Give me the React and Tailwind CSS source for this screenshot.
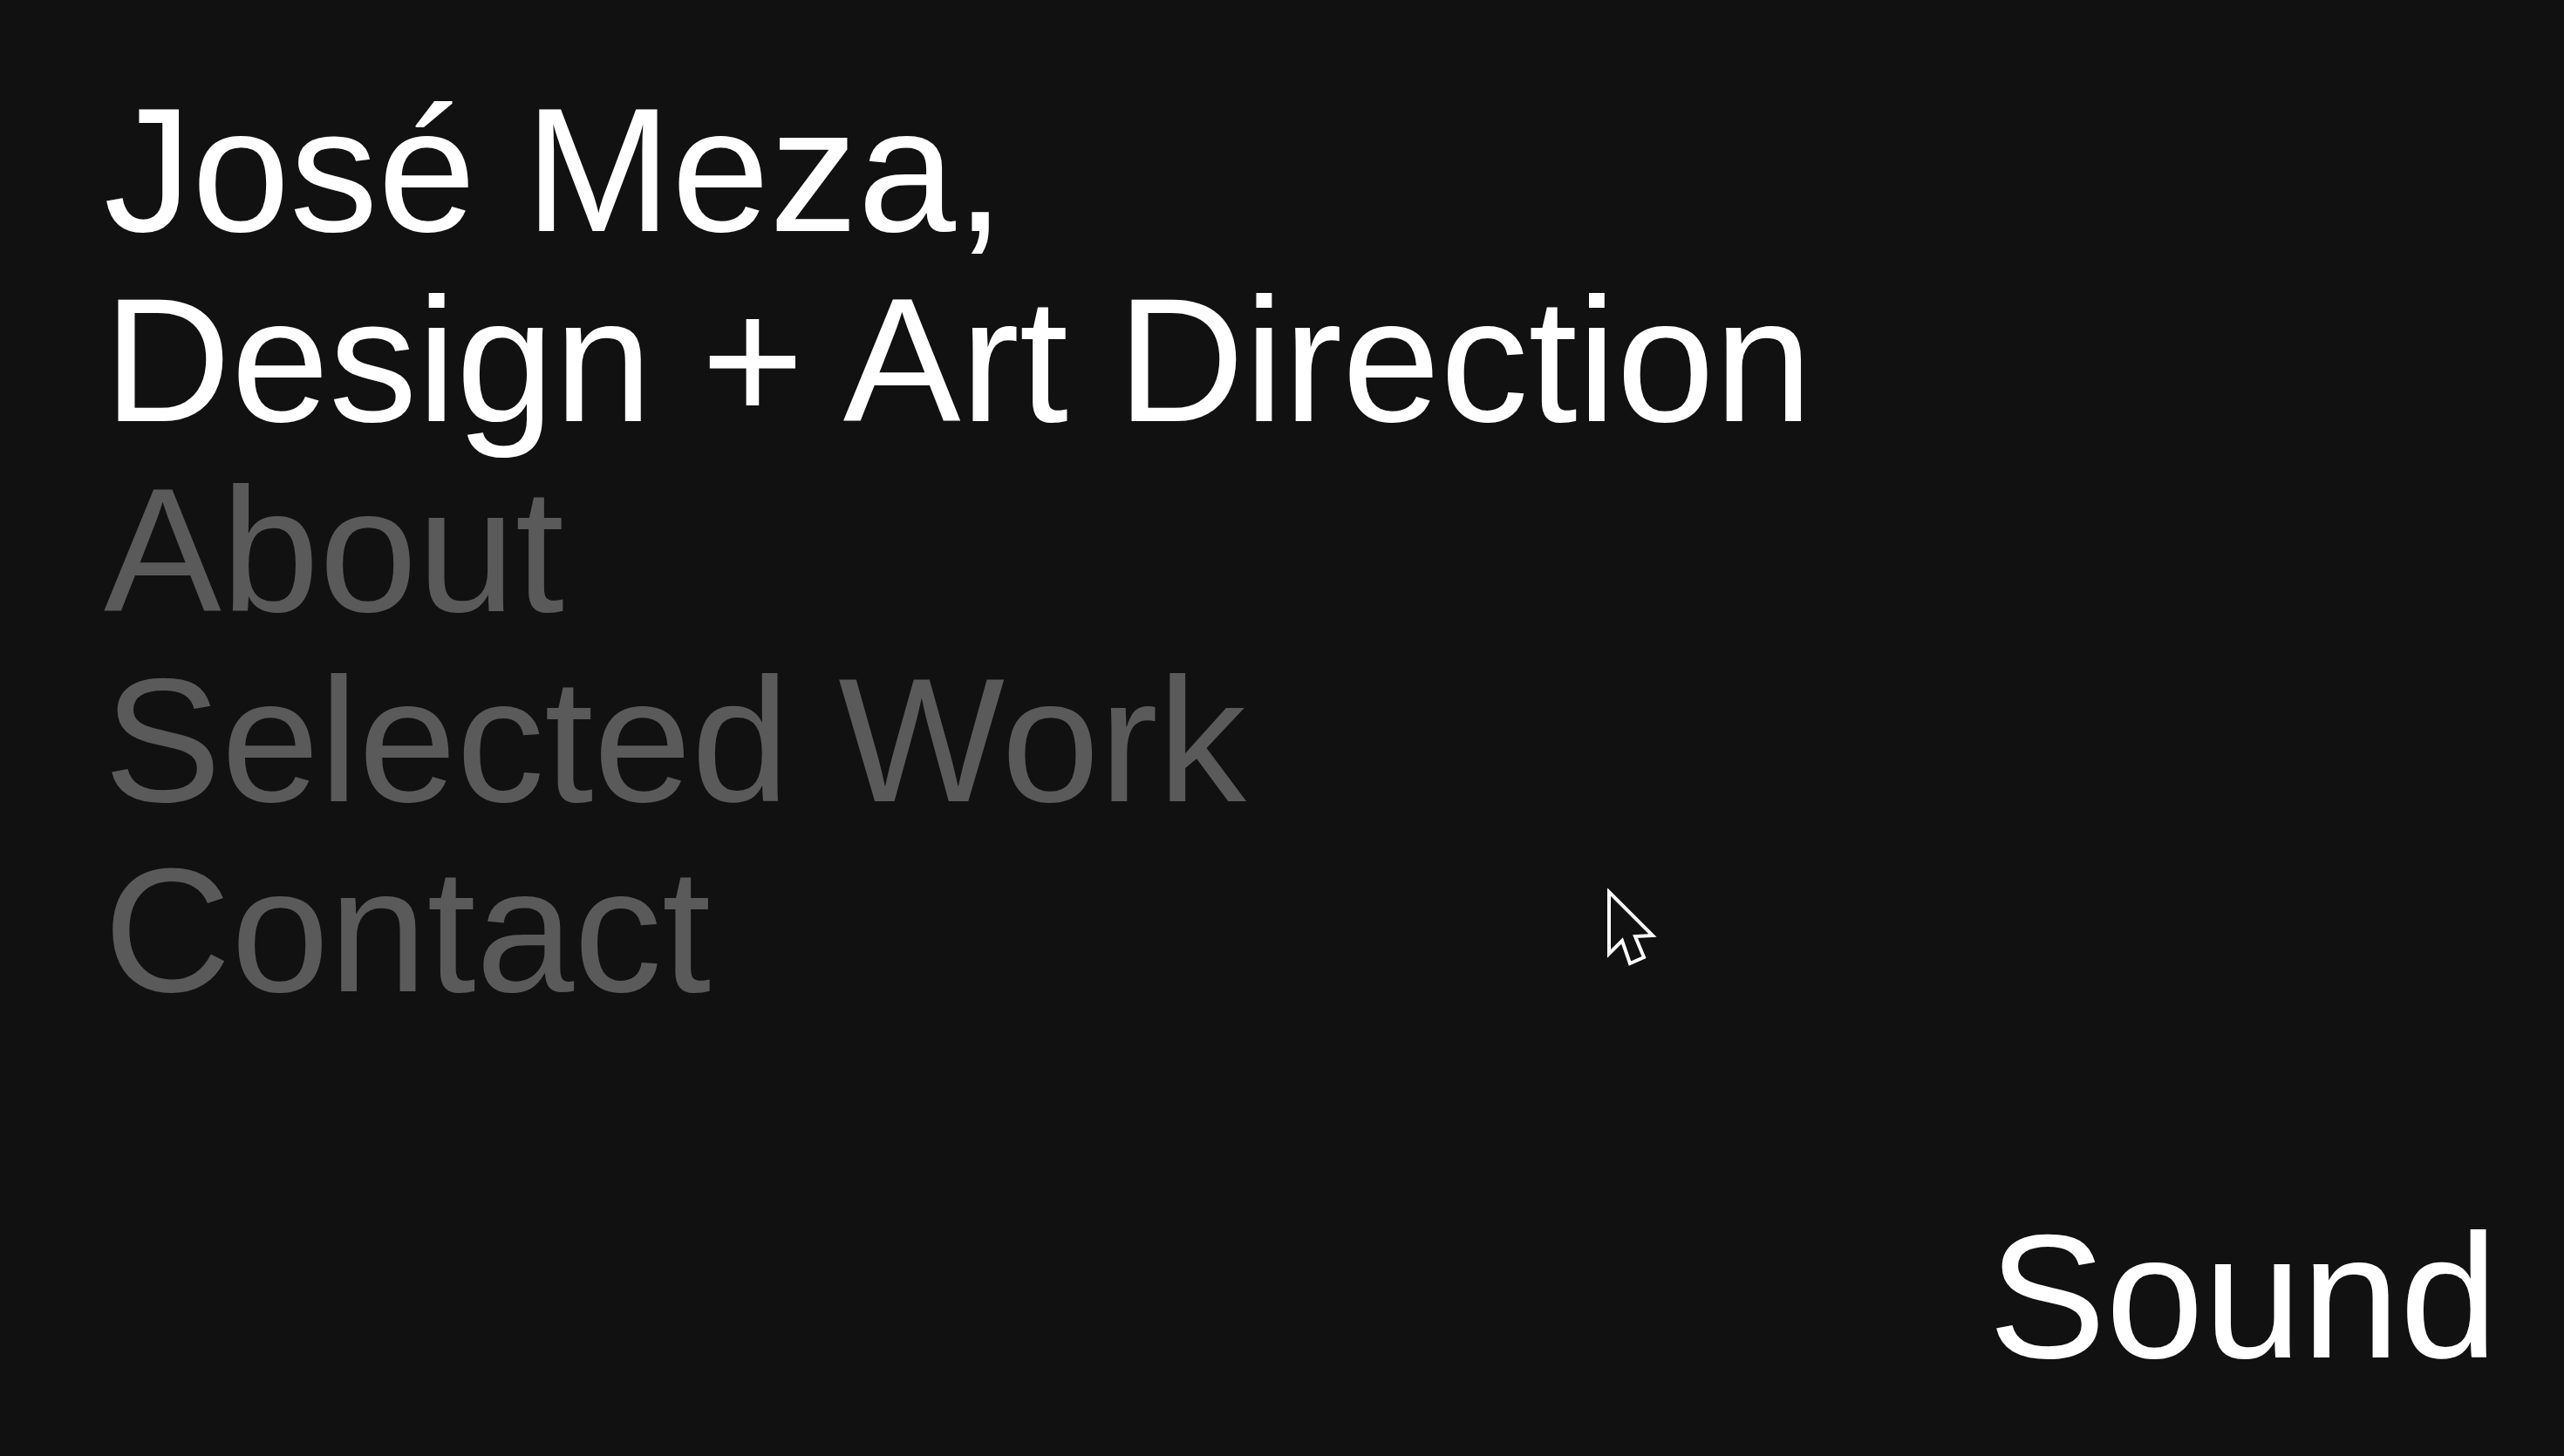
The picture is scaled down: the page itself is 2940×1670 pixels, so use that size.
import React from 'react';

const links = ['About', 'Selected Work', 'Contact'];

const Cursor = () => (
  <svg
    className="absolute left-[1841px] top-[1019px] pointer-events-none"
    width="60"
    height="92"
    viewBox="-4 -4 60 92"
  >
    <path
      d="M0 0 L0 71 L15 56 L24 82 L40 75 L30 51 L50 50 Z"
      fill="#111111"
      stroke="#ffffff"
      strokeWidth="4"
      strokeLinejoin="miter"
    />
  </svg>
);

export default function App() {
  return (
    <div className="relative flex h-screen w-full flex-col justify-between overflow-hidden bg-[#111111] pl-[119px] pr-[76px] pt-[86px] pb-[74px] font-['Liberation_Sans',Arial,sans-serif] text-[202px] leading-[218px]">
      <div>
        {/* Title */}
        <h1 className="font-normal text-white">
          José Meza,
          <br />
          Design + Art Direction
        </h1>

        {/* Nav */}
        <nav className="flex flex-col items-start text-[#5a5a5a]">
          {links.map((link) => (
            <a key={link} href="#" className="hover:text-white">
              {link}
            </a>
          ))}
        </nav>
      </div>

      <button className="self-end text-white">Sound</button>

      <Cursor />
    </div>
  );
}
